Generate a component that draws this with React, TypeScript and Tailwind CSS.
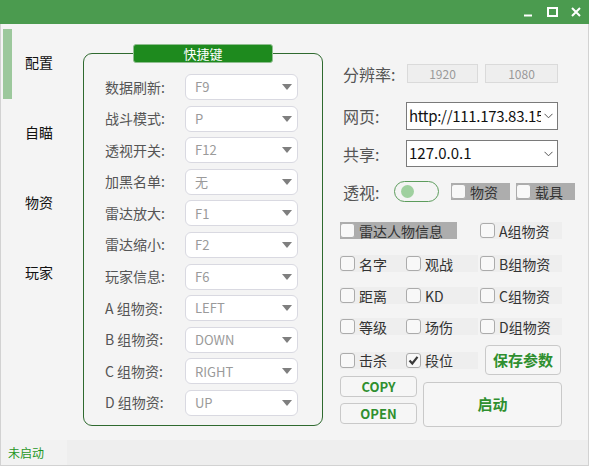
import React from 'react'

const hotkeys: [string, string][] = [
  ['数据刷新:', 'F9'],
  ['战斗模式:', 'P'],
  ['透视开关:', 'F12'],
  ['加黑名单:', '无'],
  ['雷达放大:', 'F1'],
  ['雷达缩小:', 'F2'],
  ['玩家信息:', 'F6'],
  ['A 组物资:', 'LEFT'],
  ['B 组物资:', 'DOWN'],
  ['C 组物资:', 'RIGHT'],
  ['D 组物资:', 'UP'],
]

const tabs = ['配置', '自瞄', '物资', '玩家']

function KeySelect({ value }: { value: string }) {
  return (
    <div className="flex h-[26px] w-[113px] items-center justify-between rounded-[6px] border border-[#d9d9e1] bg-white pl-[9px] pr-[5px] text-[13px] text-[#9a9a9a]">
      <span>{value}</span>
      <svg width="10" height="6" viewBox="0 0 10 6">
        <path d="M0 0h10L5 6z" fill="#7f7f7f" />
      </svg>
    </div>
  )
}

function Box({ checked = false }: { checked?: boolean }) {
  return (
    <div className="flex h-[15px] w-[15px] shrink-0 items-center justify-center rounded-[3px] border border-[#ababab] bg-[#f8f8f8]">
      {checked && (
        <svg width="11" height="11" viewBox="0 0 11 11">
          <path d="M1.5 5.5l2.8 3L9.5 1.8" fill="none" stroke="#3a3a3a" strokeWidth="2.2" />
        </svg>
      )}
    </div>
  )
}

function Check({ label, w, checked, bg = 'bg-[#eeeeee]' }: { label: string; w: string; checked?: boolean; bg?: string }) {
  return (
    <div className={`flex h-[17px] shrink-0 items-center ${w} ${bg}`}>
      <Box checked={checked} />
      <span className="ml-[4px] whitespace-nowrap text-[14px] leading-none text-[#333]">{label}</span>
    </div>
  )
}

function Chevron() {
  return (
    <svg width="9" height="6" viewBox="0 0 9 6" className="shrink-0">
      <path d="M0.5 0.8l4 4 4-4" fill="none" stroke="#555" strokeWidth="1" />
    </svg>
  )
}

export default function App() {
  return (
    <div className="flex h-[466px] w-[589px] flex-col font-['Noto_Sans_CJK_SC','Noto_Sans',sans-serif]">
      <div className="flex h-[24px] shrink-0 items-center justify-end bg-[#4b9b4f] pr-[1px]">
        <div className="flex h-[24px] w-[24px] items-center justify-center">
          <svg width="10" height="10" viewBox="0 0 10 10">
            <path d="M1 8.5h8" stroke="white" strokeWidth="2" />
          </svg>
        </div>
        <div className="flex h-[24px] w-[24px] items-center justify-center">
          <svg width="11" height="10" viewBox="0 0 11 10">
            <rect x="1" y="1" width="9" height="8" fill="none" stroke="white" strokeWidth="2" />
          </svg>
        </div>
        <div className="flex h-[24px] w-[24px] items-center justify-center">
          <svg width="10" height="10" viewBox="0 0 10 10">
            <path d="M1 1l8 8M9 1l-8 8" stroke="white" strokeWidth="2" />
          </svg>
        </div>
      </div>

      <div className="flex flex-1 flex-col border-x border-b border-[#d2d2d2] bg-[#f4f4f4]">
        <div className="flex h-[416px]">
          {/* sidebar */}
          <div className="w-[82px] shrink-0 pt-[5px]">
            {tabs.map((t, i) => (
              <div key={t} className="flex h-[70px] items-center">
                <div className={`ml-[2px] h-full w-[9px] ${i === 0 ? 'bg-[#9cc89c]' : ''}`} />
                <span className="ml-[13px] -mt-[4px] text-[14px] text-[#111]">{t}</span>
              </div>
            ))}
          </div>

          {/* hotkey group */}
          <div className="relative mt-[29px] h-[373px] w-[240px] shrink-0 rounded-[9px] border border-[#2f6a2f] pl-[21px] pt-[20px]">
            <div className="absolute left-[49px] top-[-10px] flex h-[19px] w-[140px] items-center justify-center rounded-[3px] border border-[#8fbe8f] bg-[#1e8a1e] text-[13px] leading-none text-white">
              快捷键
            </div>
            <div className="flex flex-col gap-[5.6px]">
              {hotkeys.map(([label, value]) => (
                <div key={label} className="flex items-center">
                  <span className="w-[80px] text-[14px] text-[#555]">{label}</span>
                  <KeySelect value={value} />
                </div>
              ))}
            </div>
          </div>

          {/* right panel */}
          <div className="ml-[17px] flex w-[224px] shrink-0 flex-col pt-[40px]">
            <div className="flex h-[19px] items-center">
              <span className="w-[67px] shrink-0 pl-[3px] text-[16px] text-[#555]">分辨率:</span>
              <div className="flex h-[19px] w-[71px] shrink-0 items-center justify-center border border-[#dadada] bg-[#eeeeee] text-[12px] text-[#999]">1920</div>
              <div className="ml-[7px] flex h-[19px] w-[73px] shrink-0 items-center justify-center border border-[#dadada] bg-[#eeeeee] text-[12px] text-[#999]">1080</div>
            </div>

            <div className="mt-[19px] flex h-[28px] items-center">
              <span className="w-[66px] shrink-0 pl-[3px] text-[16px] text-[#555]">网页:</span>
              <div className="flex h-[28px] w-[152px] shrink-0 items-center border border-[#7a7a7a] bg-white pr-[4px]">
                <span className="min-w-0 flex-1 overflow-hidden whitespace-nowrap pl-[2px] text-[15px] tracking-[-0.3px] text-[#111]">http://111.173.83.15</span>
                <span className="ml-[3px]"><Chevron /></span>
              </div>
            </div>

            <div className="mt-[10px] flex h-[27px] items-center">
              <span className="w-[66px] shrink-0 pl-[3px] text-[16px] text-[#555]">共享:</span>
              <div className="flex h-[27px] w-[152px] shrink-0 items-center justify-between border border-[#7a7a7a] bg-white pl-[2px] pr-[4px]">
                <span className="text-[15px] text-[#111]">127.0.0.1</span>
                <Chevron />
              </div>
            </div>

            <div className="mt-[14px] flex h-[21px] items-center">
              <span className="w-[54px] shrink-0 pl-[3px] text-[16px] text-[#555]">透视:</span>
              <div className="flex h-[21px] w-[45px] shrink-0 items-center rounded-full border-[1.5px] border-[#5c9c5c]">
                <div className="ml-[6px] h-[13px] w-[13px] rounded-full bg-[#9fd09f]" />
              </div>
              <div className="ml-[12px] shrink-0">
                <Check label="物资" w="w-[59px]" bg="bg-[#adadad]" />
              </div>
              <div className="ml-[6px] shrink-0">
                <Check label="载具" w="w-[59px]" bg="bg-[#adadad]" />
              </div>
            </div>

            <div className="mt-[20px] flex items-center">
              <div className="mr-[23px]">
                <Check label="雷达人物信息" w="w-[117px]" bg="bg-[#adadad]" />
              </div>
              <Check label="A组物资" w="w-[82px]" />
            </div>

            <div className="mt-[16px] flex items-center">
              <Check label="名字" w="w-[66px]" />
              <Check label="观战" w="w-[72px]" />
              <div className="ml-[2px]"><Check label="B组物资" w="w-[82px]" /></div>
            </div>

            <div className="mt-[15px] flex items-center">
              <Check label="距离" w="w-[66px]" />
              <Check label="KD" w="w-[72px]" />
              <div className="ml-[2px]"><Check label="C组物资" w="w-[82px]" /></div>
            </div>

            <div className="mt-[14px] flex items-center">
              <Check label="等级" w="w-[66px]" />
              <Check label="场伤" w="w-[72px]" />
              <div className="ml-[2px]"><Check label="D组物资" w="w-[82px]" /></div>
            </div>

            <div className="mt-[10px] flex h-[30px] items-center">
              <Check label="击杀" w="w-[66px]" />
              <Check label="段位" w="w-[72px]" checked />
              <button className="ml-[7px] flex h-[30px] w-[76px] shrink-0 items-center justify-center rounded-[4px] border border-[#c9c9c9] bg-[#f6f6f6] text-[15px] font-bold text-[#2f8f2f]">
                保存参数
              </button>
            </div>

            <div className="mt-[1px] flex">
              <div className="flex flex-col gap-[6px]">
                <button className="flex h-[21px] w-[77px] items-center justify-center rounded-[4px] border border-[#c9c9c9] bg-[#f6f6f6] text-[13px] font-bold text-[#2f8f2f]">COPY</button>
                <button className="flex h-[21px] w-[77px] items-center justify-center rounded-[4px] border border-[#c9c9c9] bg-[#f6f6f6] text-[13px] font-bold text-[#2f8f2f]">OPEN</button>
              </div>
              <button className="ml-[6px] mt-[6px] flex h-[45px] w-[139px] shrink-0 items-center justify-center rounded-[4px] border border-[#c9c9c9] bg-[#f6f6f6] text-[15px] font-bold text-[#2f8f2f]">
                启动
              </button>
            </div>
          </div>
        </div>

        <div className="flex h-[25px]">
          <div className="flex w-[66px] items-center bg-[#f2f2f2] pl-[7px] text-[12px] text-[#1f961f]">未启动</div>
          <div className="flex-1 bg-[#eeeeee]" />
        </div>
      </div>
    </div>
  )
}
